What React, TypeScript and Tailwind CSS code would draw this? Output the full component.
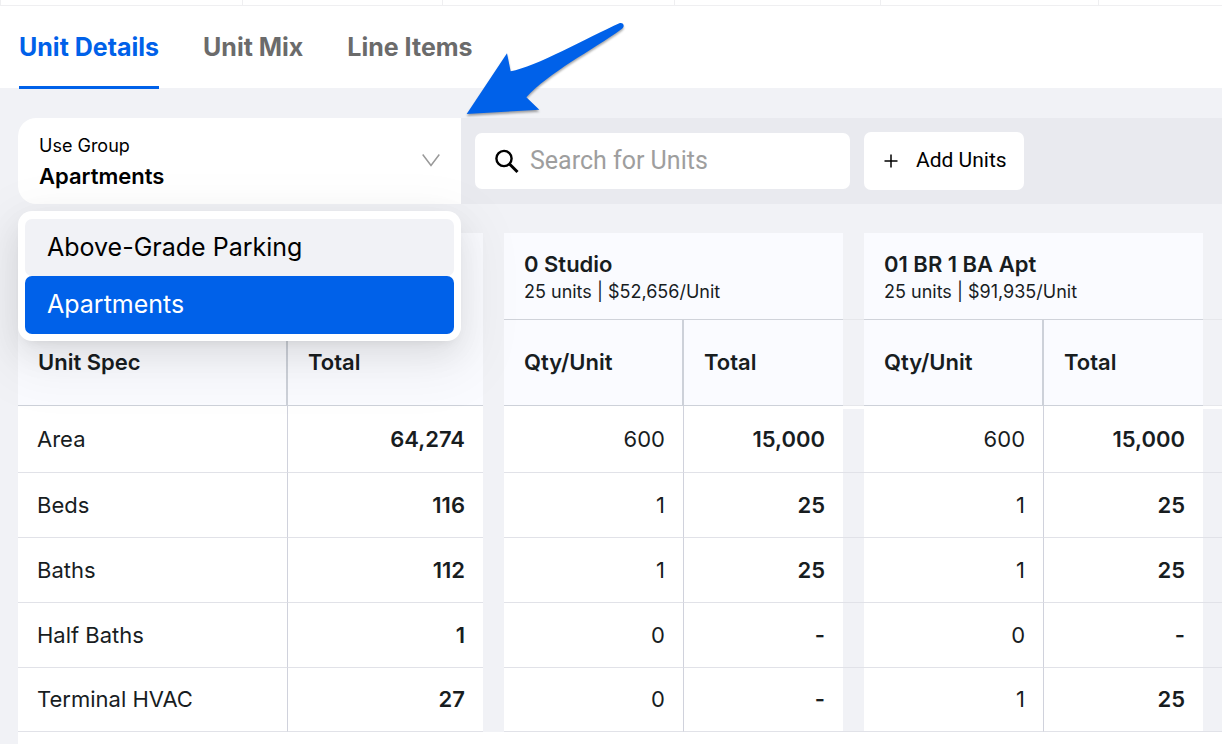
import React from "react";
import { clsx } from "clsx";

const tabs = ["Unit Details", "Unit Mix", "Line Items"];

const useGroups = ["Above-Grade Parking", "Apartments"];

const unitTypes = [
  { name: "0 Studio", summary: "25 units | $52,656/Unit" },
  { name: "01 BR 1 BA Apt", summary: "25 units | $91,935/Unit" },
];

const specs = [
  { name: "Area", total: "64,274", units: [["600", "15,000"], ["600", "15,000"]] },
  { name: "Beds", total: "116", units: [["1", "25"], ["1", "25"]] },
  { name: "Baths", total: "112", units: [["1", "25"], ["1", "25"]] },
  { name: "Half Baths", total: "1", units: [["0", "-"], ["0", "-"]] },
  { name: "Terminal HVAC", total: "27", units: [["0", "-"], ["1", "25"]] },
];

const TopStrip = () => (
  <div className="flex h-[6px] border-b border-[#EFEFF1]">
    <div className="w-[243px] border-x border-[#EFEFF1]" />
    <div className="w-[200px] border-r border-[#EFEFF1]" />
    <div className="w-[232px] border-r border-[#EFEFF1]" />
    <div className="w-[206px] border-r border-[#EFEFF1]" />
    <div className="w-[218px] border-r border-[#EFEFF1]" />
  </div>
);

const Tabs = () => (
  <nav className="flex h-[82px] gap-11 px-[19px]">
    {tabs.map((tab, i) => (
      <button
        key={tab}
        className={clsx(
          "h-[83px] border-b-3 pt-1 text-[25px] font-bold",
          i === 0
            ? "border-[#0061E9] text-[#0061E9]"
            : "border-transparent text-[#6B6B6B]"
        )}
      >
        {tab}
      </button>
    ))}
  </nav>
);

const PointerArrow = () => (
  <svg
    className="pointer-events-none absolute left-[460px] top-4 z-20 drop-shadow-[0_2px_1px_rgba(0,0,0,0.35)]"
    width="170"
    height="104"
    viewBox="60 48 510 312"
    fill="#0061E9"
    aria-hidden="true"
  >
    <path d="M80 342 L201 160 L212 214 C285 202 445 112 538 70 C550 66 556 79 546 86 C455 152 325 218 259 292 L298 329 Z" />
  </svg>
);

const UseGroupSelect = () => (
  <div className="relative w-[443px] shrink-0">
    <div className="relative flex h-full flex-col rounded-l-[18px] bg-white pl-[21px] pt-[14px]">
      <label htmlFor="use-group" className="text-[18px] leading-7">
        Use Group
      </label>
      <select
        id="use-group"
        defaultValue="Apartments"
        className="h-8 w-full appearance-none bg-transparent text-[22px] font-semibold outline-none"
      >
        {useGroups.map((group) => (
          <option key={group}>{group}</option>
        ))}
      </select>
      <svg
        className="pointer-events-none absolute right-[21px] top-9"
        width="18"
        height="13"
        viewBox="0 0 18 13"
        fill="none"
        stroke="#999999"
        strokeWidth="1.5"
        aria-hidden="true"
      >
        <path d="M0.7 0.5 L9 11.5 L17.3 0.5" />
      </svg>
    </div>
    <div
      role="listbox"
      aria-label="Use Group"
      className="absolute left-0 top-[93px] z-10 flex w-full flex-col rounded-[14px] bg-white px-[7px] pb-[7px] pt-2 shadow-[0_12px_32px_rgba(0,0,0,0.08),0_6px_12px_-8px_rgba(0,0,0,0.12),0_18px_56px_16px_rgba(0,0,0,0.05)]"
    >
      <button
        role="option"
        aria-selected={false}
        className="h-[57px] rounded-[7px] bg-[#F1F2F6] px-[22px] text-left text-[25px]"
      >
        Above-Grade Parking
      </button>
      <button
        role="option"
        aria-selected={true}
        className="h-[58px] rounded-[7px] bg-[#0061E9] px-[22px] text-left text-[25px] text-white"
      >
        Apartments
      </button>
    </div>
  </div>
);

const Toolbar = () => (
  <div className="ml-[18px] mt-[30px] flex h-[86px] gap-[14px] rounded-l-[18px] bg-[#E9EAEF]">
    <UseGroupSelect />
    <div className="flex h-14 w-[375px] items-center gap-[11px] self-center rounded-[7px] bg-white pl-[19px]">
      <svg
        className="shrink-0"
        width="25"
        height="25"
        viewBox="0 0 25 25"
        fill="none"
        stroke="black"
        strokeWidth="2.4"
        aria-hidden="true"
      >
        <circle cx="10" cy="9.5" r="7.6" />
        <path d="M15.5 15 L23.5 23" strokeWidth="3" />
      </svg>
      <input
        type="text"
        aria-label="Search for Units"
        placeholder="Search for Units"
        className="w-full min-w-0 bg-transparent font-[Roboto,sans-serif] text-[25px] outline-none placeholder:text-[#9E9E9E]"
      />
    </div>
    <button className="flex h-[58px] w-[160px] items-center gap-[18px] self-center rounded-[7px] bg-white pl-5 font-[Roboto,sans-serif] text-[21px]">
      <svg
        width="14"
        height="14"
        viewBox="0 0 14 14"
        stroke="black"
        strokeWidth="1.5"
        aria-hidden="true"
      >
        <path d="M7 0.5 V13.5 M0.5 7 H13.5" />
      </svg>
      Add Units
    </button>
  </div>
);

const UnitTable = () => (
  <table className="w-full table-fixed border-separate border-spacing-0 text-[22px] text-[#181D1F]">
    <colgroup>
      <col className="w-[270px]" />
      <col className="w-[195px]" />
      <col className="w-[21px]" />
      <col className="w-[180px]" />
      <col className="w-[159px]" />
      <col className="w-[21px]" />
      <col className="w-[180px]" />
      <col className="w-[159px]" />
      <col />
    </colgroup>
    <thead className="text-left">
      <tr className="h-[87px]">
        <th colSpan={2} className="bg-[#FAFBFF]" />
        <td />
        {unitTypes.map((unit) => (
          <React.Fragment key={unit.name}>
            <th
              colSpan={2}
              className="border-b border-[#D0D3DA] bg-[#FAFBFF] px-5 pt-1 font-normal"
            >
              <p className="font-semibold leading-7">{unit.name}</p>
              <p className="text-[18px] leading-7">{unit.summary}</p>
            </th>
            <td className="border-b border-[#E6E7EB]" />
          </React.Fragment>
        ))}
      </tr>
      <tr className="h-[86px]">
        <th className="border-b border-r-2 border-[#CDD1D9] bg-[#FAFBFF] px-5 font-semibold">
          Unit Spec
        </th>
        <th className="border-b border-[#CDD1D9] bg-[#FAFBFF] px-5 font-semibold">
          Total
        </th>
        <td />
        {unitTypes.map((unit) => (
          <React.Fragment key={unit.name}>
            <th className="border-b border-r-2 border-[#CDD1D9] bg-[#FAFBFF] px-5 font-semibold">
              Qty/Unit
            </th>
            <th className="border-b border-[#CDD1D9] bg-[#FAFBFF] px-5 font-semibold">
              Total
            </th>
            <td className="border-b border-[#E6E7EB]" />
          </React.Fragment>
        ))}
      </tr>
    </thead>
    <tbody>
      {specs.map((spec, row) => (
        <tr key={spec.name} className="h-[65px] first:h-[67px] last:h-[64px]">
          <td className="border-b border-r border-b-[#E1E2E8] border-r-[#D0D2DC] bg-white px-[19px]">
            {spec.name}
          </td>
          <td className="border-b border-[#E1E2E8] bg-white px-[18px] text-right font-semibold">
            {spec.total}
          </td>
          <td />
          {spec.units.map(([qty, total], i) => (
            <React.Fragment key={i}>
              <td className="border-b border-r border-b-[#E1E2E8] border-r-[#D0D2DC] bg-white px-[18px] text-right">
                {qty}
              </td>
              <td className="border-b border-[#E1E2E8] bg-white px-[18px] text-right font-semibold">
                {total}
              </td>
              <td
                className={clsx(
                  "border-b border-b-[#E1E2E8]",
                  row === 0 && "border-t-3 border-t-white"
                )}
              />
            </React.Fragment>
          ))}
        </tr>
      ))}
    </tbody>
  </table>
);

const App = () => {
  return (
    <main className="relative flex min-h-screen flex-col overflow-hidden bg-[#F1F2F6] font-[Inter,sans-serif] text-black">
      <header className="bg-white">
        <TopStrip />
        <Tabs />
      </header>
      <PointerArrow />
      <Toolbar />
      <section className="ml-[18px] mt-[29px] flex grow flex-col">
        <UnitTable />
        <div className="min-h-3 grow bg-white" />
      </section>
    </main>
  );
};

export default App;
